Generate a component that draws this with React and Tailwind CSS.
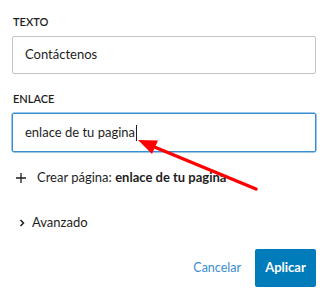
export default function App() {
  return (
    <div className="relative w-[331px] h-[300px] bg-white overflow-hidden" style={{ fontFamily: 'Lato, "Noto Sans", sans-serif' }}>
      <div className="flex flex-col pl-[12px] pr-[15px]">
        <div className="mt-[14px] text-[11px] leading-[16px] font-semibold uppercase text-[#1e1e1e] pl-[1px]">Texto</div>
        <div className="mt-[6px] h-[38px] border border-[#c3c4c7] rounded-[2px] flex items-center pl-[12px] text-[13px] text-[#1e1e1e]">
          Contáctenos
        </div>
        <div className="mt-[17px] text-[11px] leading-[16px] font-semibold uppercase text-[#1e1e1e] pl-[1px]">Enlace</div>
        <div className="mt-[6px] h-[39px] border border-[#3a8dd0] shadow-[0_0_0_0.5px_#3a8dd0] rounded-[2px] flex items-center pl-[12px] text-[13px] text-[#1e1e1e]">
          <span>enlace de tu pagina</span>
          <span className="inline-block w-[1px] h-[16px] bg-[#1e1e1e] ml-[1px]"></span>
        </div>
        <div className="mt-[16px] h-[20px] flex items-center text-[13px] text-[#1e1e1e]">
          <svg width="12" height="12" viewBox="0 0 12 12" className="ml-[3px] mr-[10px]">
            <path d="M6 1v10M1 6h10" stroke="#1e1e1e" strokeWidth="1.3" fill="none" />
          </svg>
          <span>Crear página:&nbsp;</span>
          <span className="font-bold">enlace de tu pagina</span>
        </div>
        <div className="mt-[25px] h-[20px] flex items-center text-[13px] text-[#1e1e1e]">
          <svg width="6" height="8" viewBox="0 0 6 8" className="ml-[7px] mr-[7px]">
            <path d="M1.5 1l3 3-3 3" stroke="#1e1e1e" strokeWidth="1.5" fill="none" />
          </svg>
          <span>Avanzado</span>
        </div>
        <div className="mt-[16px] flex justify-end items-center">
          <span className="text-[12.5px] text-[#3a8dd0] mr-[14px]">Cancelar</span>
          <div className="h-[38px] w-[61px] bg-[#007cba] rounded-[2px] flex items-center justify-center text-[13px] font-bold text-white">
            Aplicar
          </div>
        </div>
      </div>
      <svg className="absolute left-0 top-0 pointer-events-none" width="331" height="300">
        <line x1="256" y1="189" x2="152" y2="146" stroke="#ff0000" strokeWidth="3.5" strokeLinecap="round" />
        <polygon points="138,140 158,140.5 152,154" fill="#ff0000" />
      </svg>
    </div>
  );
}
